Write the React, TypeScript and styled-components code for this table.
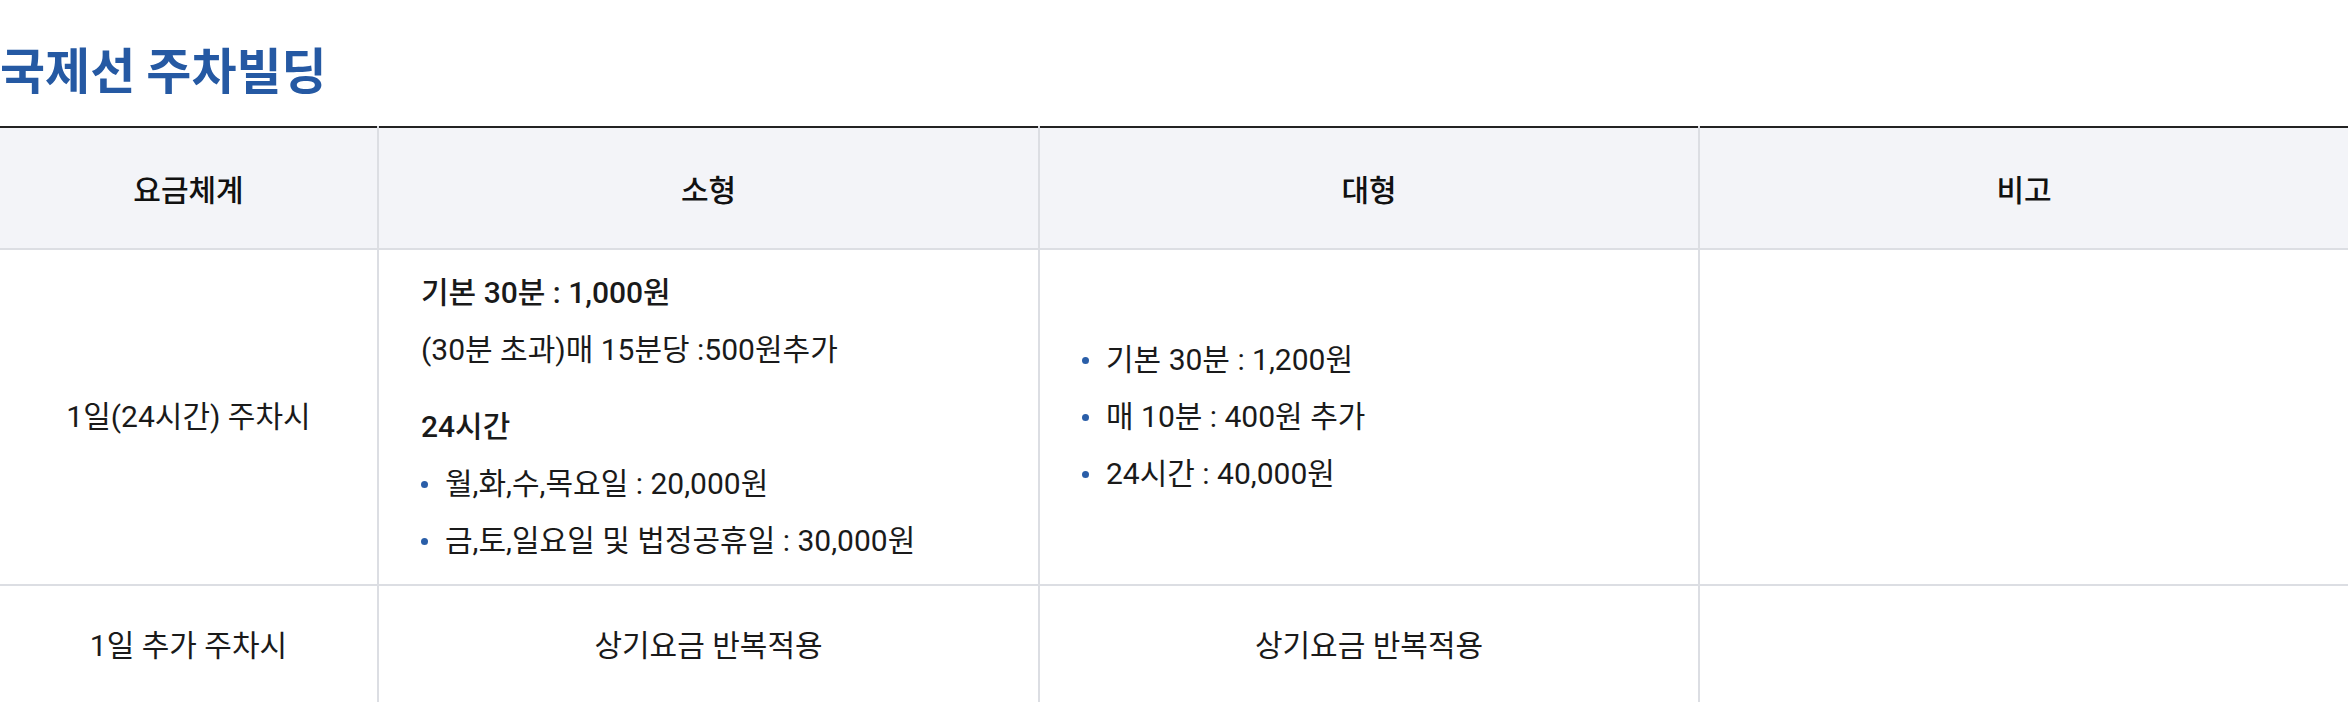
import styled, { createGlobalStyle } from 'styled-components';

const GlobalStyle = createGlobalStyle`
  body {
    margin: 0;
    background: #fff;
    color: #1a1a1a;
    font-family: Roboto, 'Noto Sans CJK KR', sans-serif;
  }
`;

type Row = {
  label: string;
  small: React.ReactNode;
  large: React.ReactNode;
  note?: string;
};

const App = () => {
  const rows: Row[] = [
    {
      label: '1일(24시간) 주차시',
      small: (
        <>
          <Line $bold>기본 30분 : 1,000원</Line>
          <Line>(30분 초과)매 15분당 :500원추가</Line>
          <Line $bold $gap>
            24시간
          </Line>
          <Bullets>
            <li>월,화,수,목요일 : 20,000원</li>
            <li>금,토,일요일 및 법정공휴일 : 30,000원</li>
          </Bullets>
        </>
      ),
      large: (
        <Bullets>
          <li>기본 30분 : 1,200원</li>
          <li>매 10분 : 400원 추가</li>
          <li>24시간 : 40,000원</li>
        </Bullets>
      ),
    },
    {
      label: '1일 추가 주차시',
      small: '상기요금 반복적용',
      large: '상기요금 반복적용',
    },
  ];

  return (
    <Wrapper>
      <GlobalStyle />
      <Title>국제선 주차빌딩</Title>
      <Table>
        <colgroup>
          <col style={{ width: 378 }} />
          <col style={{ width: 661 }} />
          <col style={{ width: 660 }} />
          <col />
        </colgroup>
        <thead>
          <tr>
            <Th>요금체계</Th>
            <Th>소형</Th>
            <Th>대형</Th>
            <Th>비고</Th>
          </tr>
        </thead>
        <tbody>
          {rows.map(row => (
            <tr key={row.label}>
              <Td>{row.label}</Td>
              <Td $left={typeof row.small !== 'string'}>{row.small}</Td>
              <Td $left={typeof row.large !== 'string'}>{row.large}</Td>
              <Td>{row.note}</Td>
            </tr>
          ))}
        </tbody>
      </Table>
    </Wrapper>
  );
};
export default App;

const Wrapper = styled.div`
  width: 2348px;
  padding-top: 37px;
`;

const Title = styled.h2`
  margin: 0 0 27px;
  font-family: 'Noto Sans CJK KR', sans-serif;
  font-size: 49px;
  font-weight: 600;
  line-height: 62px;
  color: #2559a3;
`;

const Table = styled.table`
  width: 100%;
  table-layout: fixed;
  border-collapse: collapse;
  border-top: 2px solid #222;
  font-size: 30px;
`;

const Th = styled.th`
  height: 120px;
  padding: 0;
  background: #f3f4f8;
  font-weight: 500;
  color: #111;
  border-bottom: 2px solid #dcdee3;
  & + & {
    border-left: 2px solid #dcdee3;
  }
`;

const Td = styled.td<{ $left?: boolean }>`
  height: 120px;
  padding: ${p => (p.$left ? '23px 42px' : '0')};
  text-align: ${p => (p.$left ? 'left' : 'center')};
  vertical-align: middle;
  line-height: 40px;
  border-bottom: 2px solid #dcdee3;
  & + & {
    border-left: 2px solid #dcdee3;
  }
`;

const Line = styled.p<{ $bold?: boolean; $gap?: boolean }>`
  margin: ${p => (p.$gap ? '37px' : '17px')} 0 0;
  font-weight: ${p => (p.$bold ? 500 : 400)};
  &:first-child {
    margin-top: 0;
  }
`;

const Bullets = styled.ul`
  margin: 17px 0 0;
  padding: 0;
  list-style: none;
  &:first-child {
    margin-top: 0;
  }
  li {
    position: relative;
    padding-left: 24px;
  }
  li + li {
    margin-top: 17px;
  }
  li::before {
    content: '';
    position: absolute;
    left: 0;
    top: 17px;
    width: 7px;
    height: 7px;
    border-radius: 50%;
    background: #2a5ea8;
  }
`;
